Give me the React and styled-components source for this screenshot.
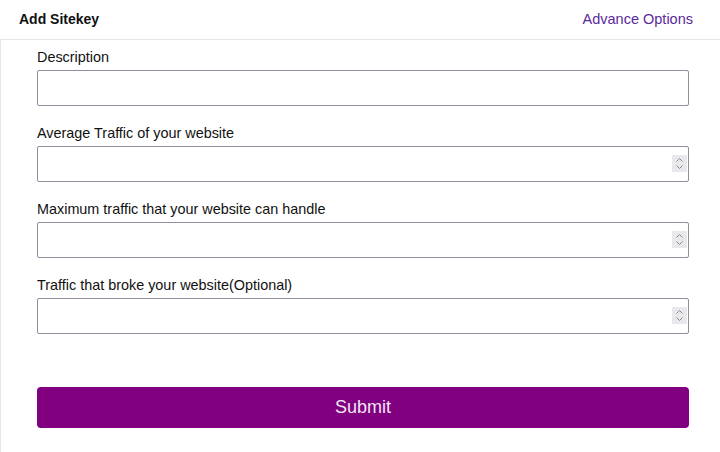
import React from 'react';
import styled, { createGlobalStyle } from 'styled-components';

const GlobalStyle = createGlobalStyle`
    body {
        margin: 0;
        background: #fff;
        font-family: "Liberation Sans", Arial, sans-serif;
    }
`;

const fields = [
    { label: 'Description', number: false },
    { label: 'Average Traffic of your website', number: true },
    { label: 'Maximum traffic that your website can handle', number: true },
    { label: 'Traffic that broke your website(Optional)', number: true }
];

const Spinner = () => (
    <SpinBox>
        <svg width="9" height="13" viewBox="0 0 9 13">
            <path d="M1.5 4.5 L4.5 1.5 L7.5 4.5 M1.5 8.5 L4.5 11.5 L7.5 8.5" fill="none" stroke="#8a8a8a" strokeWidth="1" />
        </svg>
    </SpinBox>
);

const App = () => {
    return (
        <Page>
            <GlobalStyle />
            <Header>
                <Title>Add Sitekey</Title>
                <Link href="#">Advance Options</Link>
            </Header>
            <Body>
                {fields.map((f, i) => (
                    <Field key={i}>
                        <Label>{f.label}</Label>
                        <InputWrap>
                            <Input type="text" />
                            {f.number && <Spinner />}
                        </InputWrap>
                    </Field>
                ))}
                <Submit>Submit</Submit>
            </Body>
        </Page>
    );
};

// ======  STYLES  ======

const Page = styled.div`
    width: 720px;
    height: 452px;
    display: flex;
    flex-direction: column;
`;

const Header = styled.div`
    height: 39px;
    border-bottom: 1px solid #e6e6e6;
    display: flex;
    align-items: center;
    justify-content: space-between;
    padding: 0 27px 0 19px;
`;

const Title = styled.span`
    font-size: 14px;
    font-weight: bold;
    color: #111;
    margin-top: -1px;
`;

const Link = styled.a`
    font-size: 14.5px;
    color: #5b2a9b;
    text-decoration: none;
    margin-top: -1px;
`;

const Body = styled.div`
    flex: 1;
    border-left: 1px solid #e6e6e6;
    padding: 9px 31px 0 36px;
    display: flex;
    flex-direction: column;
`;

const Field = styled.div`
    display: flex;
    flex-direction: column;
    margin-bottom: 19px;
`;

const Label = styled.label`
    font-size: 14.4px;
    line-height: 17px;
    color: #111;
    margin-bottom: 4px;
`;

const InputWrap = styled.div`
    position: relative;
`;

const Input = styled.input`
    box-sizing: border-box;
    width: 100%;
    height: 36px;
    border: 1px solid #8f8f9d;
    border-radius: 2px;
    padding: 0 8px;
    font-size: 15px;
    font-family: inherit;
    outline: none;
`;

const SpinBox = styled.div`
    position: absolute;
    right: 2px;
    top: 9px;
    width: 15px;
    height: 17px;
    background: #e9e9ed;
    display: flex;
    align-items: center;
    justify-content: center;
`;

const Submit = styled.button`
    margin-top: 34px;
    height: 41px;
    width: 100%;
    border: none;
    border-radius: 4px;
    background: #800080;
    color: #f3e6f3;
    font-size: 18px;
    font-family: inherit;
    cursor: pointer;
`;

export default App;
